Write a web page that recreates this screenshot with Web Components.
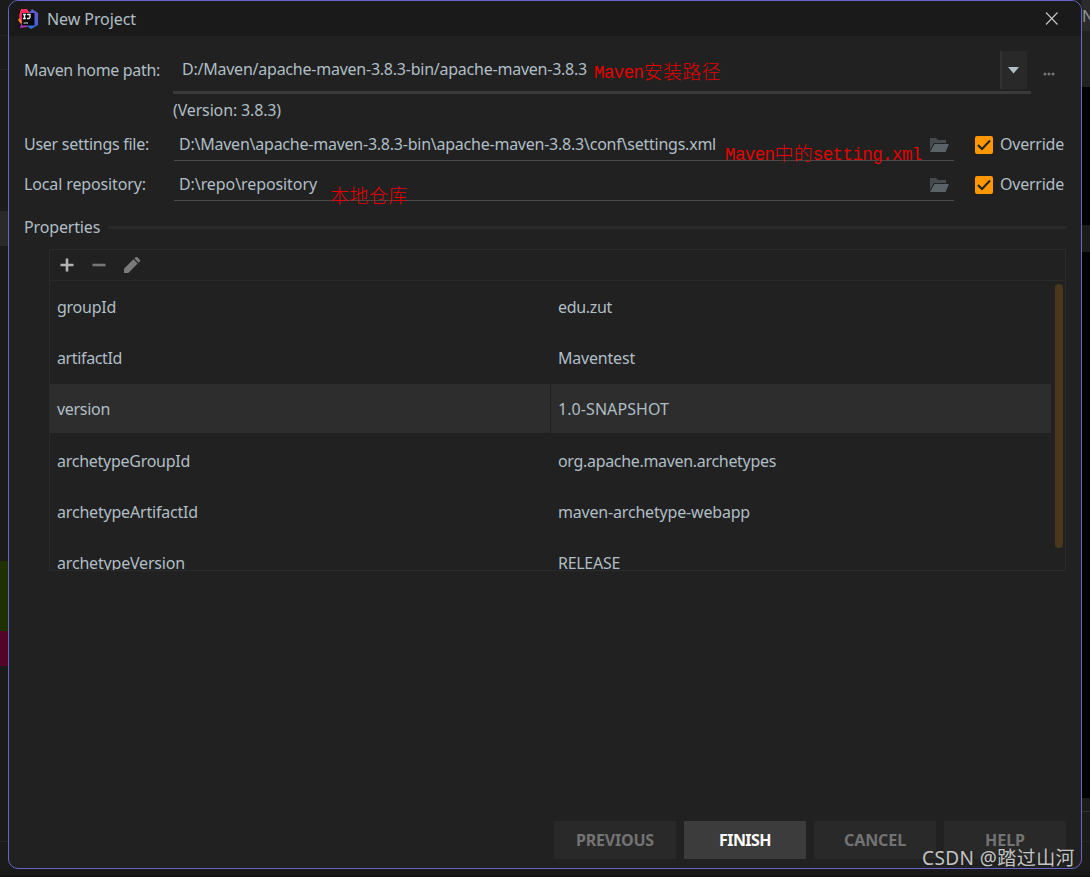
<!DOCTYPE html>
<html lang="zh-CN">
<head>
<meta charset="UTF-8">
<title>New Project</title>
<style>
    body {
        margin: 0;
        width: 1090px;
        height: 877px;
        overflow: hidden;
        background: #1b1b1b;
        color: #b0bec5;
        font: 16px/20px "Noto Sans", "Noto Sans CJK SC", sans-serif;
    }
    .props { margin: 12px 15px 0 40px; }
</style>
</head>
<body>
<ide-backdrop>
    <project-dialog heading="New Project">
        <wizard-form>
            <path-row kind="combo" label="Maven home path:" label-width="136" value="D:/Maven/apache-maven-3.8.3-bin/apache-maven-3.8.3" value-width="405">
                <red-note style="left:421px;top:8px" width="129">Maven安装路径</red-note>
            </path-row>
            <path-row kind="file" label="User settings file:" label-width="125" value="D:\Maven\apache-maven-3.8.3-bin\apache-maven-3.8.3\conf\settings.xml" value-width="537">
                <red-note style="left:551px;top:11px" width="199">Maven中的setting.xml</red-note>
            </path-row>
            <path-row kind="file" label="Local repository:" label-width="122" value="D:\repo\repository" value-width="138">
                <red-note style="left:156px;top:13px" width="78">本地仓库</red-note>
            </path-row>
        </wizard-form>
        <section-title>Properties</section-title>
        <property-table class="props">
            <property-row name="groupId" nw="59" value="edu.zut" vw="54"></property-row>
            <property-row name="artifactId" nw="65" value="Maventest" vw="77"></property-row>
            <property-row name="version" nw="53" value="1.0-SNAPSHOT" vw="111" selected></property-row>
            <property-row name="archetypeGroupId" nw="133" value="org.apache.maven.archetypes" vw="218"></property-row>
            <property-row name="archetypeArtifactId" nw="141" value="maven-archetype-webapp" vw="192"></property-row>
            <property-row name="archetypeVersion" nw="128" value="RELEASE" vw="62"></property-row>
        </property-table>
        <wizard-button slot="footer" width="78">PREVIOUS</wizard-button>
        <wizard-button slot="footer" width="52" primary>FINISH</wizard-button>
        <wizard-button slot="footer" width="62">CANCEL</wizard-button>
        <wizard-button slot="footer" width="40">HELP</wizard-button>
    </project-dialog>
    <water-mark slot="mark">CSDN @踏过山河</water-mark>
</ide-backdrop>

<script>
const define = (name, render, setup) => {
    customElements.define(name, class extends HTMLElement {
        constructor() {
            super();
            this.attachShadow({ mode: 'open' });
        }
        connectedCallback() {
            this.shadowRoot.innerHTML = render(this).trim();
            if (setup) setup(this, this.shadowRoot);
        }
    });
};

// one line of text, tracked so that it is as wide as its width attribute
define('fit-text', () => `
    <style>
    :host { display: block; flex: none; white-space: nowrap; }
    span { display: inline-block; white-space: pre; vertical-align: top; }
    </style>
    <span><slot></slot></span>`,
    (el, root) => {
        const width = Number(el.getAttribute('width'));
        const span = root.querySelector('span');
        if (!width) return;
        const spacing = (width - span.getBoundingClientRect().width) / el.textContent.length;
        span.style.letterSpacing = spacing + 'px';
    });

define('ide-backdrop', () => `
    <style>
    :host { display: grid; position: relative; grid-template-columns: 8px 1074px 8px; grid-template-rows: 869px 8px; }
    .side { display: flex; flex-direction: column; overflow: hidden; }
    .side i { flex: none; box-sizing: border-box; }
    .bottom { grid-column: 1 / 4; background: #191919; box-sizing: border-box; border-bottom: 2px solid #131313; }
    .tab { height: 31px; background: #2b2b2b; color: #8b9296; padding: 6px 0 0 0; font-style: normal; white-space: nowrap; }
    </style>
    <div class="side">
        <i style="height:36px;border-bottom:1px solid #252525"></i>
        <i style="height:34px;border-bottom:1px solid #252525"></i>
        <i style="height:141px"></i>
        <i style="height:35px;background:#2a2a2a"></i>
        <i style="height:315px"></i>
        <i style="height:70px;background:#203100"></i>
        <i style="height:35px;background:#530529"></i>
        <i style="height:176px;border-bottom:1px solid #252525"></i>
    </div>
    <slot></slot>
    <div class="side">
        <i class="tab">N</i>
        <i style="height:56px;background:#212121"></i>
        <i style="height:138px;background:#000"></i>
        <i style="height:27px;background:#1b1b1b"></i>
        <i style="height:546px;background:#000"></i>
        <i style="height:14px;border-bottom:1px solid #333"></i>
        <i style="height:30px;border-bottom:1px solid #242424"></i>
    </div>
    <div class="bottom"></div>
    <slot name="mark"></slot>`);

define('project-dialog', el => `
    <style>
    :host { display: flex; flex-direction: column; box-sizing: border-box; height: 869px; border: 1px solid #6963c9; border-radius: 10px; background: #212121; overflow: hidden; }
    header { display: flex; align-items: center; height: 35px; flex: none; background: #1a1a1a; padding: 0 23px 0 9px; }
    header fit-text { flex: 1; margin-left: 9px; }
    svg { display: block; }
    main { flex: 1; }
    footer { display: flex; justify-content: flex-end; gap: 8px; padding: 0 15px 9px 0; }
    </style>
    <header>
        <svg width="20" height="20" viewBox="0 0 20 20">
            <defs><linearGradient id="g" x1="0" y1="0" x2="1" y2="1"><stop stop-color="#fe315d"/><stop offset="1" stop-color="#ff1f65"/></linearGradient>
            <linearGradient id="b" x1="0" y1="1" x2="1" y2="0"><stop stop-color="#2b7be5"/><stop offset=".5" stop-color="#3f63d8"/><stop offset="1" stop-color="#7b52c8"/></linearGradient></defs>
            <path d="M3 7 0 11l3 4 5-4z" fill="#f98620"/>
            <path d="M4 13 2 19l7-1 2-5z" fill="#b332bb"/>
            <path d="M3 0h6l3 4-1 8-7 2-3-7z" fill="url(#g)"/>
            <path d="M14 0 20 4v12l-7 4-4-3 2-13z" fill="url(#b)"/>
            <rect x="4" y="4" width="12.500" height="12.500" fill="#080808"/>
            <path d="M5 5.500h3M6.500 5.500v4M5 9.500h3M9 5.500h3v3l-1 1H9" stroke="#eee" stroke-width="1.300" fill="none"/>
            <path d="M5.500 14h4.500" stroke="#ddd" stroke-width="1"/>
        </svg>
        <fit-text width="89">${el.getAttribute('heading')}</fit-text>
        <svg width="13" height="13" viewBox="0 0 13 13"><path d="M1 .5l11.500 12M12.500.5l-11.500 12" stroke="#c8c8c8" stroke-width="1.100"/></svg>
    </header>
    <main><slot></slot></main>
    <footer><slot name="footer"></slot></footer>`);

define('wizard-form', () => `
    <style>:host { display: flex; flex-direction: column; padding-top: 15px; }</style>
    <slot></slot>`);

define('path-row', el => {
    const combo = el.getAttribute('kind') === 'combo';
    const text = (name) => `<fit-text width="${el.getAttribute(name + '-width')}">${el.getAttribute(name)}</fit-text>`;
    return `
    <style>
    :host { display: grid; grid-template-columns: 149px 1fr; padding: 0 15px; box-sizing: border-box; }
    .label { padding-top: ${combo ? 9 : 4}px; }
    .line { display: flex; }
    .field { display: flex; position: relative; box-sizing: border-box; }
    .combo .field { width: 858px; height: 43px; border-bottom: 3px solid #3a3a3a; padding: 8px 4px 2px 9px; margin-bottom: 6px; justify-content: space-between; }
    .arrow { display: flex; align-items: center; justify-content: center; box-sizing: border-box; width: 27px; height: 38px; margin-top: -8px; background: #292929; border-left: 2px solid #323232; padding-right: 2px; }
    .dots { margin: 21px 0 0 12px; }
    .version { padding: 0 0 10px 0; }
    .file { height: 40px; }
    .file .field { width: 780px; height: 31px; margin-left: 1px; padding: 4px 5px 0; border-bottom: 1px solid #484848; justify-content: space-between; flex: none; }
    .folder { margin-top: 4px; }
    .check { display: flex; flex: none; margin: 6px 7px 0 21px; }
    .file > fit-text { padding-top: 4px; }
    svg { display: block; flex: none; }
    </style>
    <div class="label">${text('label')}</div>
    ${combo ? `<div>
        <div class="line combo">
            <div class="field">${text('value')}
                <div class="arrow"><svg width="11" height="7"><path d="M0 0h11L5.500 6.500z" fill="#b0bec5"/></svg></div>
                <slot></slot>
            </div>
            <svg class="dots" width="12" height="4"><g fill="#777"><circle cx="2" cy="2" r="1.500"/><circle cx="6" cy="2" r="1.500"/><circle cx="10" cy="2" r="1.500"/></g></svg>
        </div>
        <div class="version"><fit-text width="108">(Version: 3.8.3)</fit-text></div>
    </div>` : `<div class="line file">
        <div class="field">${text('value')}
            <svg class="folder" width="19" height="14" viewBox="0 0 19 14"><path d="M0 12V0h6l2 2h8v3H4z" fill="#454b4e"/><path d="M4.500 6H19l-3.500 8H0z" fill="#5a6367"/></svg>
            <slot></slot>
        </div>
        <svg class="check" width="18" height="18" viewBox="0 0 18 18"><rect width="18" height="18" rx="2" fill="#ff9800"/><path d="M3 9l4 4 8-8.500" stroke="#212121" stroke-width="2" fill="none"/></svg>
        <fit-text width="64">Override</fit-text>
    </div>`}`;
});

// remark laid over a field, a Han character takes two Latin cells
define('red-note', el => `
    <style>
    :host { position: absolute; color: #e60000; font: 19px/24px "Noto Sans CJK SC", sans-serif; white-space: nowrap; }
    fit-text { font-weight: 300; }
    b { position: relative; top: -1px; font: 17.500px/20px "Liberation Mono", monospace; letter-spacing: -.6px; }
    </style>
    <fit-text width="${el.getAttribute('width')}">${el.textContent.replace(/[\x21-\x7e]+/g, '<b>$&</b>')}</fit-text>`);

define('section-title', () => `
    <style>
    :host { display: flex; align-items: center; padding: 7px 15px 0; height: 20px; }
    .title { width: 76px; white-space: nowrap; letter-spacing: -.15px; padding-bottom: 1px; }
    i { flex: 1; height: 3px; margin-left: 8px; background: #2a2a2a; }
    </style>
    <div class="title"><slot></slot></div><i></i>`);

define('property-table', () => `
    <style>
    :host { display: block; position: relative; box-sizing: border-box; height: 322px; border: 1px solid #2a2a2a; overflow: hidden; }
    .tools { display: flex; align-items: center; box-sizing: border-box; height: 31px; border-bottom: 1px solid #2a2a2a; padding: 0 10px; gap: 18px; }
    .rows { width: 1001px; height: 289px; overflow: hidden; }
    .bar { position: absolute; top: 34px; right: 2px; width: 8px; height: 264px; border-radius: 4px; background: #4b371b; }
    </style>
    <div class="tools">
        <svg width="14" height="14"><path d="M7 .5v13M.5 7h13" stroke="#b4b4b4" stroke-width="2.600"/></svg>
        <svg width="14" height="14"><path d="M.5 7h13" stroke="#777" stroke-width="2.600"/></svg>
        <svg width="17" height="17" viewBox="0 0 18 18"><path d="M0 17v-4.500L10 2.500l4.500 4.500-10 10zM11 1.500 12.500 0q.7-.5 1.400 0l3.100 3.100q.5.700 0 1.400L15.500 6z" fill="#7b7b7b"/></svg>
    </div>
    <div class="rows"><slot></slot></div>
    <div class="bar"></div>`);

define('property-row', el => `
    <style>
    :host { display: grid; grid-template-columns: 500px 501px; height: 51.200px; align-items: start; }
    div { height: 49px; box-sizing: border-box; padding: 15px 0 0 7px; margin-top: 1px; }
    div + div { padding-left: 8px; }
    :host([selected]) div { background: #2d2d2d; }
    :host([selected]) div + div { border-left: 1px solid #222; padding-left: 7px; }
    </style>
    <div><fit-text width="${el.getAttribute('nw')}">${el.getAttribute('name')}</fit-text></div>
    <div><fit-text width="${el.getAttribute('vw')}">${el.getAttribute('value')}</fit-text></div>`);

define('wizard-button', el => `
    <style>
    :host { display: flex; align-items: center; justify-content: center; width: 122px; height: 38px; background: #292929; color: #737373; font-weight: 700; }
    :host([primary]) { background: #3c3c3c; color: #fff; }
    </style>
    <fit-text width="${el.getAttribute('width')}">${el.textContent}</fit-text>`);

define('water-mark', el => `
    <style>:host { position: absolute; right: 15px; bottom: 6px; color: #c4c4c4; font: 19px/26px "Noto Sans", "Noto Sans CJK SC", sans-serif; text-shadow: 1px 1px 1px #222; }</style>
    <fit-text width="153">${el.textContent}</fit-text>`);
</script>
</body>
</html>
